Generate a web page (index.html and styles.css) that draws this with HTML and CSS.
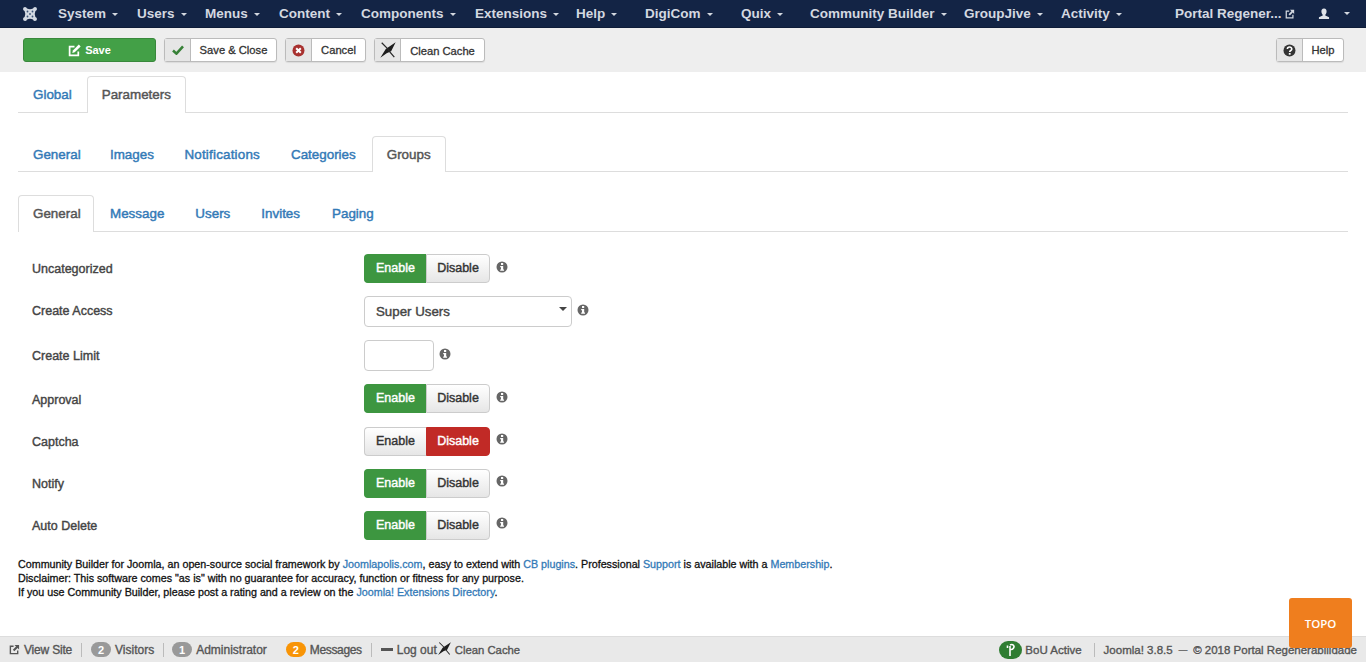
FILE: index.html
```html
<!DOCTYPE html>
<html lang="en">
<head>
<meta charset="utf-8">
<title>Community Builder</title>
<link rel="stylesheet" href="styles.css">
</head>
<body>
<svg class="defs" width="0" height="0" aria-hidden="true">
  <defs>
    <symbol id="broom" viewBox="0 0 20 20">
      <path d="M1.5 18.5 L7.5 9 L18.5 1.5 L13.5 11.5 L8.5 13.5 Z" fill="#1d1d1d"/>
      <path d="M3 2 L10 9 L12 12 L17 18" fill="none" stroke="#2a2a2a" stroke-width="1.4"/>
    </symbol>
    <symbol id="info" viewBox="0 0 12 12">
      <circle cx="6" cy="6" r="5.5" fill="#666"/>
      <rect x="5" y="2" width="2.2" height="2" fill="#fff"/>
      <path d="M4.2 5 H7.2 V8.6 H8 V9.8 H4.2 V8.6 H5 V6.2 H4.2 Z" fill="#fff"/>
    </symbol>
    <symbol id="extlink" viewBox="0 0 12 12">
      <path d="M9.5 7 V10.5 H1.5 V2.5 H5" fill="none" stroke="currentColor" stroke-width="1.5"/>
      <path d="M6 1 H11 V6 L9.3 4.3 L5.8 7.8 L4.2 6.2 L7.7 2.7 Z" fill="currentColor"/>
    </symbol>
  </defs>
</svg>

<header class="topnav">
  <svg class="jlogo" viewBox="0 0 16 16" width="16" height="16" aria-hidden="true">
    <path d="M1 3 A2.2 2.2 0 0 1 3 1 A2.2 2.2 0 0 1 5 2.6 Q8 4 11 2.6 A2.2 2.2 0 0 1 13 1 A2.2 2.2 0 0 1 15 3 A2.2 2.2 0 0 1 13.4 5 Q12 8 13.4 11 A2.2 2.2 0 0 1 15 13 A2.2 2.2 0 0 1 13 15 A2.2 2.2 0 0 1 11 13.4 Q8 12 5 13.4 A2.2 2.2 0 0 1 3 15 A2.2 2.2 0 0 1 1 13 A2.2 2.2 0 0 1 2.6 11 Q4 8 2.6 5 A2.2 2.2 0 0 1 1 3 Z" fill="#d3d9e2"/>
    <g fill="#3d5578">
      <circle cx="5.5" cy="5.5" r=".9"/><circle cx="10.5" cy="5.5" r=".9"/>
      <circle cx="5.5" cy="10.5" r=".9"/><circle cx="10.5" cy="10.5" r=".9"/>
      <circle cx="8" cy="8" r=".9"/>
    </g>
  </svg>
  <nav class="menu">
    <a class="menu-item">System<i class="caret"></i></a>
    <a class="menu-item">Users<i class="caret"></i></a>
    <a class="menu-item">Menus<i class="caret"></i></a>
    <a class="menu-item">Content<i class="caret"></i></a>
    <a class="menu-item">Components<i class="caret"></i></a>
    <a class="menu-item">Extensions<i class="caret"></i></a>
    <a class="menu-item">Help<i class="caret"></i></a>
    <a class="menu-item">DigiCom<i class="caret"></i></a>
    <a class="menu-item">Quix<i class="caret"></i></a>
    <a class="menu-item">Community Builder<i class="caret"></i></a>
    <a class="menu-item">GroupJive<i class="caret"></i></a>
    <a class="menu-item">Activity<i class="caret"></i></a>
  </nav>
  <div class="nav-right">
    <a class="site-link">Portal Regener... <svg class="ext-ico" width="10" height="10"><use href="#extlink"/></svg></a>
    <a class="user-link">
      <svg width="12" height="12" viewBox="0 0 13 13" aria-hidden="true"><path d="M6.5 0.5 C8.6 0.5 9.5 2 9.3 4 C9.2 5.5 8.5 6.6 7.9 7.2 V8 L12 10 V12 H1 V10 L5.1 8 V7.2 C4.5 6.6 3.8 5.5 3.7 4 C3.5 2 4.4 0.5 6.5 0.5 Z" fill="#dfe3ea"/></svg>
      <i class="caret"></i>
    </a>
  </div>
</header>

<div class="toolbar">
  <button class="btn btn-save">
    <svg width="13" height="13" viewBox="0 0 12 12" aria-hidden="true"><path d="M9.5 7 V10.5 H1.5 V2.5 H6" fill="none" stroke="#fff" stroke-width="1.6"/><path d="M10 0.5 L11.7 2.2 L6.2 7.7 L4 8.2 L4.5 6 Z" fill="#fff"/></svg>
    Save
  </button>
  <div class="btn-group">
    <span class="btn-ico"><svg width="12" height="10" viewBox="0 0 13 11" aria-hidden="true"><path d="M1 6 L4.8 9.5 L12 1.5" fill="none" stroke="#378137" stroke-width="2.8"/></svg></span>
    <span class="btn-text w-close">Save &amp; Close</span>
  </div>
  <div class="btn-group">
    <span class="btn-ico"><svg width="13" height="13" viewBox="0 0 13 13" aria-hidden="true"><circle cx="6.5" cy="6.5" r="6" fill="#a8312f"/><path d="M4.2 4.2 L8.8 8.8 M8.8 4.2 L4.2 8.8" stroke="#fff" stroke-width="2"/></svg></span>
    <span class="btn-text w-cancel">Cancel</span>
  </div>
  <div class="btn-group">
    <span class="btn-ico"><svg width="18" height="18"><use href="#broom"/></svg></span>
    <span class="btn-text w-cache">Clean Cache</span>
  </div>
  <div class="btn-group help">
    <span class="btn-ico"><svg width="13" height="13" viewBox="0 0 13 13" aria-hidden="true"><circle cx="6.5" cy="6.5" r="6" fill="#333"/><path d="M4.4 5 C4.4 2.4 8.8 2.4 8.8 5 C8.8 6.6 6.7 6.4 6.7 8" fill="none" stroke="#fff" stroke-width="1.6"/><rect x="5.8" y="9" width="1.8" height="1.7" fill="#fff"/></svg></span>
    <span class="btn-text w-help">Help</span>
  </div>
</div>

<main class="content">
  <ul class="tabs tabs-1">
    <li class="tab">Global</li>
    <li class="tab active">Parameters</li>
  </ul>
  <ul class="tabs tabs-2">
    <li class="tab">General</li>
    <li class="tab">Images</li>
    <li class="tab wide">Notifications</li>
    <li class="tab">Categories</li>
    <li class="tab active">Groups</li>
  </ul>
  <ul class="tabs tabs-3">
    <li class="tab active">General</li>
    <li class="tab">Message</li>
    <li class="tab">Users</li>
    <li class="tab">Invites</li>
    <li class="tab">Paging</li>
  </ul>

  <form class="form">
    <div class="row"><label class="lbl">Uncategorized</label>
      <div class="toggle"><span class="opt on-green">Enable</span><span class="opt">Disable</span></div>
      <svg class="info" width="12" height="12"><use href="#info"/></svg></div>
    <div class="row high"><label class="lbl">Create Access</label>
      <div class="select">Super Users<i class="sel-caret"></i></div>
      <svg class="info" width="12" height="12"><use href="#info"/></svg></div>
    <div class="row"><label class="lbl">Create Limit</label>
      <div class="input"></div>
      <svg class="info" width="12" height="12"><use href="#info"/></svg></div>
    <div class="row low"><label class="lbl">Approval</label>
      <div class="toggle"><span class="opt on-green">Enable</span><span class="opt">Disable</span></div>
      <svg class="info" width="12" height="12"><use href="#info"/></svg></div>
    <div class="row low"><label class="lbl">Captcha</label>
      <div class="toggle"><span class="opt">Enable</span><span class="opt on-red">Disable</span></div>
      <svg class="info" width="12" height="12"><use href="#info"/></svg></div>
    <div class="row low"><label class="lbl">Notify</label>
      <div class="toggle"><span class="opt on-green">Enable</span><span class="opt">Disable</span></div>
      <svg class="info" width="12" height="12"><use href="#info"/></svg></div>
    <div class="row low"><label class="lbl">Auto Delete</label>
      <div class="toggle"><span class="opt on-green">Enable</span><span class="opt">Disable</span></div>
      <svg class="info" width="12" height="12"><use href="#info"/></svg></div>
  </form>

  <div class="credits">
    <div>Community Builder for Joomla, an open-source social framework by <a>Joomlapolis.com</a>, easy to extend with <a>CB plugins</a>. Professional <a>Support</a> is available with a <a>Membership</a>.</div>
    <div>Disclaimer: This software comes "as is" with no guarantee for accuracy, function or fitness for any purpose.</div>
    <div>If you use Community Builder, please post a rating and a review on the <a>Joomla! Extensions Directory</a>.</div>
  </div>
</main>

<footer class="status">
  <div class="st-left">
    <span class="st-item tight"><svg class="st-ext" width="11" height="11"><use href="#extlink"/></svg>View Site</span>
    <span class="sep"></span>
    <span class="st-item"><b class="badge">2</b>Visitors</span>
    <span class="sep sep-b"></span>
    <span class="st-item"><b class="badge">1</b>Administrator</span>
    <span class="st-item msg"><b class="badge orange">2</b><span class="tighter">Messages</span></span>
    <span class="sep"></span>
    <span class="st-item"><i class="minus"></i>Log out</span>
    <span class="st-item cache"><svg width="15" height="15"><use href="#broom"/></svg>Clean Cache</span>
  </div>
  <div class="st-right">
    <span class="st-item"><b class="badge green"><svg width="11" height="14" viewBox="0 0 11 14" aria-hidden="true"><path d="M5 13 V3 M5 2 C8 0.5 10 3 8.4 5.2 C7.6 6.3 6 6.6 5 6.2 M2.5 2.5 V5" fill="none" stroke="#fff" stroke-width="1.6"/></svg></b>BoU Active</span>
    <span class="sep sep-r"></span>
    <span class="st-item">Joomla! 3.8.5<span class="dash">—</span>© 2018 Portal Regenerabilidade</span>
  </div>
</footer>

<a class="topo">TOPO</a>
</body>
</html>
```
FILE: styles.css
```css
* { box-sizing: border-box; }
html, body { margin: 0; padding: 0; height: 100%; }
body {
  font-family: "Liberation Sans", Arial, sans-serif;
  font-size: 13px;
  color: #333;
  background: #fff;
  overflow: hidden;
}
.defs { position: absolute; }

/* top navigation */
.topnav {
  height: 28px;
  background: #132445;
  display: flex;
  align-items: center;
  color: #dfe3ea;
  border-bottom: 1px solid #0e1c38;
}
.jlogo { margin-left: 22px; flex: none; }
.menu {
  margin-left: 20px;
  display: grid;
  grid-template-columns: 79px 68px 74px 82px 114px 101px 69px 96px 69px 154px 97px 114px;
}
.menu-item {
  font-size: 13.5px;
  font-weight: bold;
  white-space: nowrap;
  color: #d3d8e0;
  line-height: 27px;
}
.caret {
  display: inline-block;
  width: 0;
  height: 0;
  margin-left: 6px;
  vertical-align: 2px;
  border-left: 3px solid transparent;
  border-right: 3px solid transparent;
  border-top: 3px solid #d3d8e0;
}
.nav-right { display: flex; align-items: center; }
.site-link {
  font-size: 13.5px;
  font-weight: bold;
  color: #d3d8e0;
  white-space: nowrap;
  line-height: 27px;
}
.ext-ico { vertical-align: -1px; color: #d3d8e0; }
.user-link { margin-left: 23px; display: flex; align-items: center; gap: 8px; }

/* toolbar */
.toolbar {
  height: 44px;
  background: #eee;
  display: flex;
  align-items: flex-start;
  padding: 10px 22px 0 23px;
  gap: 8px;
}
.btn {
  font-family: inherit;
  cursor: pointer;
}
.btn-save {
  width: 133px;
  height: 24px;
  background: #43a047;
  color: #fff;
  border: 1px solid #39883c;
  border-radius: 3px;
  font-size: 11px;
  font-weight: bold;
  display: flex;
  align-items: center;
  justify-content: center;
  gap: 4px;
  padding: 0;
}
.btn-group {
  height: 24px;
  display: flex;
  background: #fff;
  border: 1px solid #bbb;
  border-radius: 3px;
  box-shadow: 0 1px 1px rgba(0,0,0,.08);
  font-size: 11.2px;
  color: #333;
}
.btn-ico {
  width: 26px;
  background: #e6e6e6;
  border-right: 1px solid #bbb;
  display: flex;
  align-items: center;
  justify-content: center;
}
.btn-text { display: flex; align-items: center; justify-content: center; -webkit-text-stroke: .3px #333; }
.w-close { width: 85px; }
.w-cancel { width: 53px; }
.w-cache { width: 83px; padding-top: 1px; }
.w-help { width: 40px; }
.help { margin-left: auto; }

/* tabs */
.content { padding: 4px 18px 0; }
.tabs {
  list-style: none;
  margin: 0;
  padding: 0;
  display: flex;
  border-bottom: 1px solid #ddd;
}
.tab {
  font-size: 13.4px;
  -webkit-text-stroke: .45px currentColor;
  color: #337ab7;
  padding: 9px 14px 0;
  line-height: 18px;
  border: 1px solid transparent;
  border-bottom: 0;
  border-radius: 4px 4px 0 0;
  margin-bottom: -1px;
}
.tab.active {
  color: #555;
  background: #fff;
  border-color: #ddd;
  padding-bottom: 1px;
}
.tab.wide { letter-spacing: .2px; }
.tabs-1 .tab { height: 37px; }
.tabs-2 .tab { height: 36px; }
.tabs-2 { margin-top: 23px; }
.tabs-2 .tab:first-child { width: 77px; }
.tabs-2 .tab:nth-child(2) { margin-right: 0; }
.tabs-2 .tab:nth-child(n+3) { margin-left: .5px; }
.tabs-2 .tab:nth-child(n+4) { margin-left: 1px; }
.tabs-3 { margin-top: 23px; }
.tabs-3 .tab { height: 37px; padding-top: 9px; }
.tabs-3 .tab.active { width: 76px; }
.tabs-3 .tab:nth-child(n+2) { margin-left: 1px; }
.tabs-3 .tab:nth-child(5) { margin-left: 2px; }

/* form */
.form {
  padding: 22px 0 0 14px;
  display: flex;
  flex-direction: column;
  gap: 13.15px;
}
.row { display: flex; align-items: center; }
.lbl {
  width: 332px;
  flex: none;
  font-size: 12.5px;
  -webkit-text-stroke: .4px currentColor;
  color: #444;
}
.low .lbl { position: relative; top: 1px; }
.high .lbl { position: relative; top: -1px; }
.toggle { display: flex; height: 29px; width: 126px; font-size: 12.5px; -webkit-text-stroke: .4px currentColor; }
.opt {
  display: flex;
  align-items: center;
  justify-content: center;
  color: #333;
  background: linear-gradient(#fff, #e6e6e6);
  border: 1px solid #ccc;
  padding-bottom: 1px;
}
.opt:first-child { width: 62px; border-radius: 4px 0 0 4px; border-right: 0; }
.opt:last-child { width: 64px; border-radius: 0 4px 4px 0; }
.on-green { background: #3d9640; border-color: #3d9640; color: #fff; }
.on-red { background: #c12a26; border-color: #c12a26; color: #fff; }
.info { margin-left: 6px; flex: none; position: relative; top: -2px; }
.select + .info, .input + .info { margin-left: 5px; }
.select {
  width: 208px;
  height: 31px;
  border: 1px solid #ccc;
  border-radius: 4px;
  padding: 0 11px;
  line-height: 29px;
  font-size: 13.3px;
  -webkit-text-stroke: .4px currentColor;
  color: #444;
  position: relative;
}
.sel-caret {
  position: absolute;
  right: 4px;
  top: 10px;
  border-left: 4px solid transparent;
  border-right: 4px solid transparent;
  border-top: 4px solid #444;
}
.input { width: 70px; height: 31px; border: 1px solid #ccc; border-radius: 4px; }

/* credits */
.credits {
  margin-top: 17px;
  font-size: 10.72px;
  line-height: 14px;
  color: #111;
  -webkit-text-stroke: .3px #111;
}
.credits a { color: #337ab7; -webkit-text-stroke-color: #337ab7; }

/* status bar */
.status {
  position: fixed;
  left: 0;
  right: 0;
  bottom: 0;
  height: 26px;
  background: #e9e9e9;
  border-top: 1px solid #ddd;
  display: flex;
  justify-content: space-between;
  align-items: center;
  padding: 0 9px 0 9px;
  font-size: 12px;
  color: #555;
  -webkit-text-stroke: .35px currentColor;
}
.st-left, .st-right { display: flex; align-items: center; }
.st-right { font-size: 11.5px; }
.st-item { display: flex; align-items: center; white-space: nowrap; }
.tight { letter-spacing: -.2px; }
.tighter { letter-spacing: -.35px; }
.st-ext { margin-right: 4px; color: #555; }
.sep { width: 1px; height: 14px; background: #bbb; margin: 0 9px; }
.sep-b { margin-right: 8px; }
.sep-r { margin: 0 9px 0 12px; }
.dash { font-size: 8.5px; margin: 0 6px; }
.badge {
  display: inline-flex;
  align-items: center;
  justify-content: center;
  min-width: 20px;
  height: 15px;
  padding: 0 6px;
  border-radius: 8px;
  background: #999;
  color: #fff;
  font-size: 11px;
  font-weight: bold;
  margin-right: 4px;
  letter-spacing: 0;
  -webkit-text-stroke: 0;
}
.orange { background: #f89406; }
.green { background: #2f7d32; width: 23px; height: 18px; padding: 0; border-radius: 9px; margin-right: 3px; }
.msg { margin-left: 19px; }
.minus { display: inline-block; width: 12px; height: 3px; background: #555; margin-right: 4px; }
.cache { position: relative; gap: 3px; margin-top: 1px; font-size: 11.3px; }
.cache svg { margin-top: -4px; }

/* back to top */
.topo {
  position: fixed;
  left: 1289px;
  top: 598px;
  width: 63px;
  height: 50px;
  background: #ef7e1e;
  border-radius: 3px;
  color: #fff;
  font-family: "Open Sans", sans-serif;
  font-size: 11.5px;
  font-weight: 600;
  display: flex;
  align-items: center;
  justify-content: center;
}
```
